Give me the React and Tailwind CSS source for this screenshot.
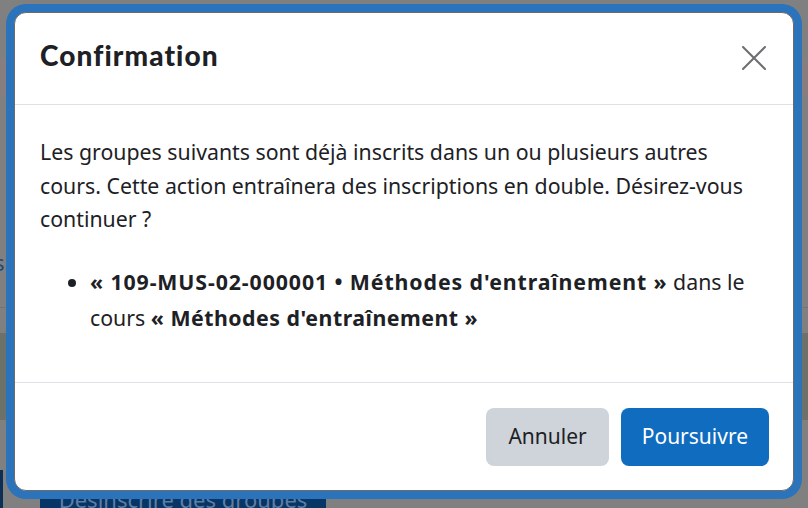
export default function App() {
  return (
    <div className="relative w-[808px] h-[508px] overflow-hidden bg-[#808080]" style={{ fontFamily: '"Noto Sans", "Open Sans", sans-serif' }}>
      {/* underlying page, dimmed */}
      <div className="flex flex-col w-full h-full">
        <div className="h-[60px] shrink-0" />
        <div className="h-[37px] shrink-0 bg-[#877f7f]" />
        <div className="h-[150px] shrink-0" />
        <div className="h-[30px] shrink-0 flex items-center">
          <span className="-ml-[6px] text-[22px] text-[#1f4a78] leading-none">s</span>
        </div>
        <div className="h-[31px] shrink-0 border-b border-[#747474]" />
        <div className="h-[25px] shrink-0" />
        <div className="h-[87px] shrink-0 bg-[#6c7169]" />
        <div className="flex-1 flex items-end">
          <div className="w-[3px] h-[38px] bg-[#0c2f55]" />
          <div className="ml-[37px] w-[286px] h-[20px] bg-[#073566] flex justify-center overflow-hidden">
            <span className="text-[22px] leading-[20px] text-[#5f7ea3] mt-[1px] whitespace-nowrap">Désinscrire des groupes</span>
          </div>
        </div>
      </div>

      {/* modal */}
      <div className="absolute left-[6px] top-[4px] w-[796px] h-[495px] rounded-[20px] bg-[#2b73bb] p-[8px]">
        <div className="w-full h-full rounded-[12px] bg-white flex flex-col border border-[#6b6b6b]">
          <div className="h-[92px] shrink-0 border-b border-[#dee2e6] flex items-center justify-between pl-[25px] pr-[27px]">
            <h5 className="text-[28px] font-black text-[#1d2125] tracking-[1.1px] -mt-[8px]" style={{ fontFamily: 'Lato, "Noto Sans", sans-serif' }}>Confirmation</h5>
            <svg width="24" height="24" viewBox="0 0 24 24" className="-mt-[2px]">
              <path d="M1 1 L23 23 M23 1 L1 23" stroke="#6c6e71" strokeWidth="2" strokeLinecap="round" />
            </svg>
          </div>
          <div className="flex-1 pl-[25px] pr-[30px] pt-[30px] text-[21.3px] leading-[33.5px] text-[#1d2125]">
            <p>Les groupes suivants sont déjà inscrits dans un ou plusieurs autres cours. Cette action entraînera des inscriptions en double. Désirez-vous continuer ?</p>
            <ul className="list-disc pl-[50px] mt-[28px] leading-[36px]">
              <li><b className="tracking-[0.9px]">« 109-MUS-02-000001 • Méthodes d'entraînement »</b> dans le cours <b className="tracking-[0.5px]">« Méthodes d'entraînement »</b></li>
            </ul>
          </div>
          <div className="h-[108px] shrink-0 border-t border-[#dee2e6] flex items-start justify-end gap-[12px] pr-[24px] pt-[25px]">
            <button className="h-[58px] px-[22px] rounded-[8px] bg-[#ced4da] text-[#1d2125] text-[21px]">Annuler</button>
            <button className="h-[58px] px-[21px] rounded-[8px] bg-[#0f6cbf] text-white text-[21px]">Poursuivre</button>
          </div>
        </div>
      </div>
    </div>
  );
}
